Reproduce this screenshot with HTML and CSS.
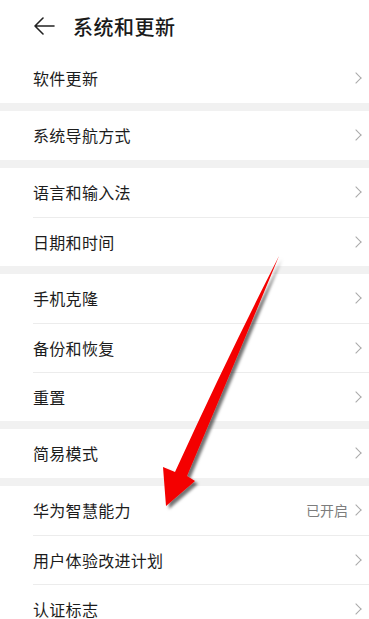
FILE: index.html
```html
<!DOCTYPE html>
<html lang="zh">
<head>
<meta charset="utf-8">
<link rel="stylesheet" href="styles.css">
</head>
<body>
<div class="page">
  <header class="topbar">
    <svg class="back" width="22" height="18" viewBox="0 0 22 18"><path d="M21 9H2M10 1L2 9l8 8" fill="none" stroke="#222" stroke-width="1.6" stroke-linecap="round" stroke-linejoin="round"/></svg>
    <h1 class="title">系统和更新</h1>
  </header>

  <section class="group">
    <div class="row"><span class="label">软件更新</span><span class="chev"></span></div>
  </section>
  <section class="group">
    <div class="row"><span class="label">系统导航方式</span><span class="chev"></span></div>
  </section>
  <section class="group">
    <div class="row"><span class="label">语言和输入法</span><span class="chev"></span></div>
    <div class="row"><span class="label">日期和时间</span><span class="chev"></span></div>
  </section>
  <section class="group">
    <div class="row"><span class="label">手机克隆</span><span class="chev"></span></div>
    <div class="row"><span class="label">备份和恢复</span><span class="chev"></span></div>
    <div class="row"><span class="label">重置</span><span class="chev"></span></div>
  </section>
  <section class="group">
    <div class="row"><span class="label">简易模式</span><span class="chev"></span></div>
  </section>
  <section class="group">
    <div class="row"><span class="label">华为智慧能力</span><span class="value">已开启</span><span class="chev"></span></div>
    <div class="row"><span class="label">用户体验改进计划</span><span class="chev"></span></div>
    <div class="row"><span class="label">认证标志</span><span class="chev"></span></div>
  </section>

  <svg class="pointer" width="369" height="619" viewBox="0 0 369 619">
    <defs>
      <filter id="sh" x="-20%" y="-20%" width="140%" height="140%">
        <feDropShadow dx="3" dy="3" stdDeviation="1.8" flood-color="#000" flood-opacity="0.55"/>
      </filter>
    </defs>
    <path d="M279 256 Q236 360 187 476 L195 481 L166 506 L163 467 L175 472 Q226 360 279 256 Z" fill="#f40000" filter="url(#sh)"/>
  </svg>
</div>
</body>
</html>
```
FILE: styles.css
```css
* { box-sizing: border-box; margin: 0; padding: 0; }
html, body { background: #f1f1f1; }
body {
  font-family: "Noto Sans CJK SC", "Noto Sans", sans-serif;
  color: #1c1c1c;
}
.page {
  position: relative;
  width: 369px;
  height: 619px;
  overflow: hidden;
  display: flex;
  flex-direction: column;
  gap: 8px;
}
.topbar {
  flex: none;
  height: 54px;
  margin-bottom: -8px;
  background: #fff;
  display: flex;
  align-items: center;
  padding-left: 33px;
  padding-bottom: 2px;
}
.back { flex: none; margin-right: 18px; }
.title {
  font-size: 20px;
  font-weight: 500;
  color: #1a1a1a;
  letter-spacing: 0.5px;
}
.group {
  background: #fff;
  padding-left: 33px;
  flex: none;
}
.row {
  height: 49px;
  display: flex;
  align-items: center;
  padding-right: 7px;
  padding-bottom: 1px;
}
.row + .row { border-top: 1px solid #ececec; }
.label {
  flex: 1;
  font-size: 16px;
  letter-spacing: 0.3px;
}
.value {
  font-size: 14px;
  color: #7d7d7d;
  margin-right: 4px;
}
.chev {
  width: 8px;
  height: 8px;
  border-top: 1.4px solid #a9a9a9;
  border-right: 1.4px solid #a9a9a9;
  transform: rotate(45deg);
  margin-right: 2px;
}
.pointer {
  position: absolute;
  left: 0;
  top: 0;
  pointer-events: none;
}
```
